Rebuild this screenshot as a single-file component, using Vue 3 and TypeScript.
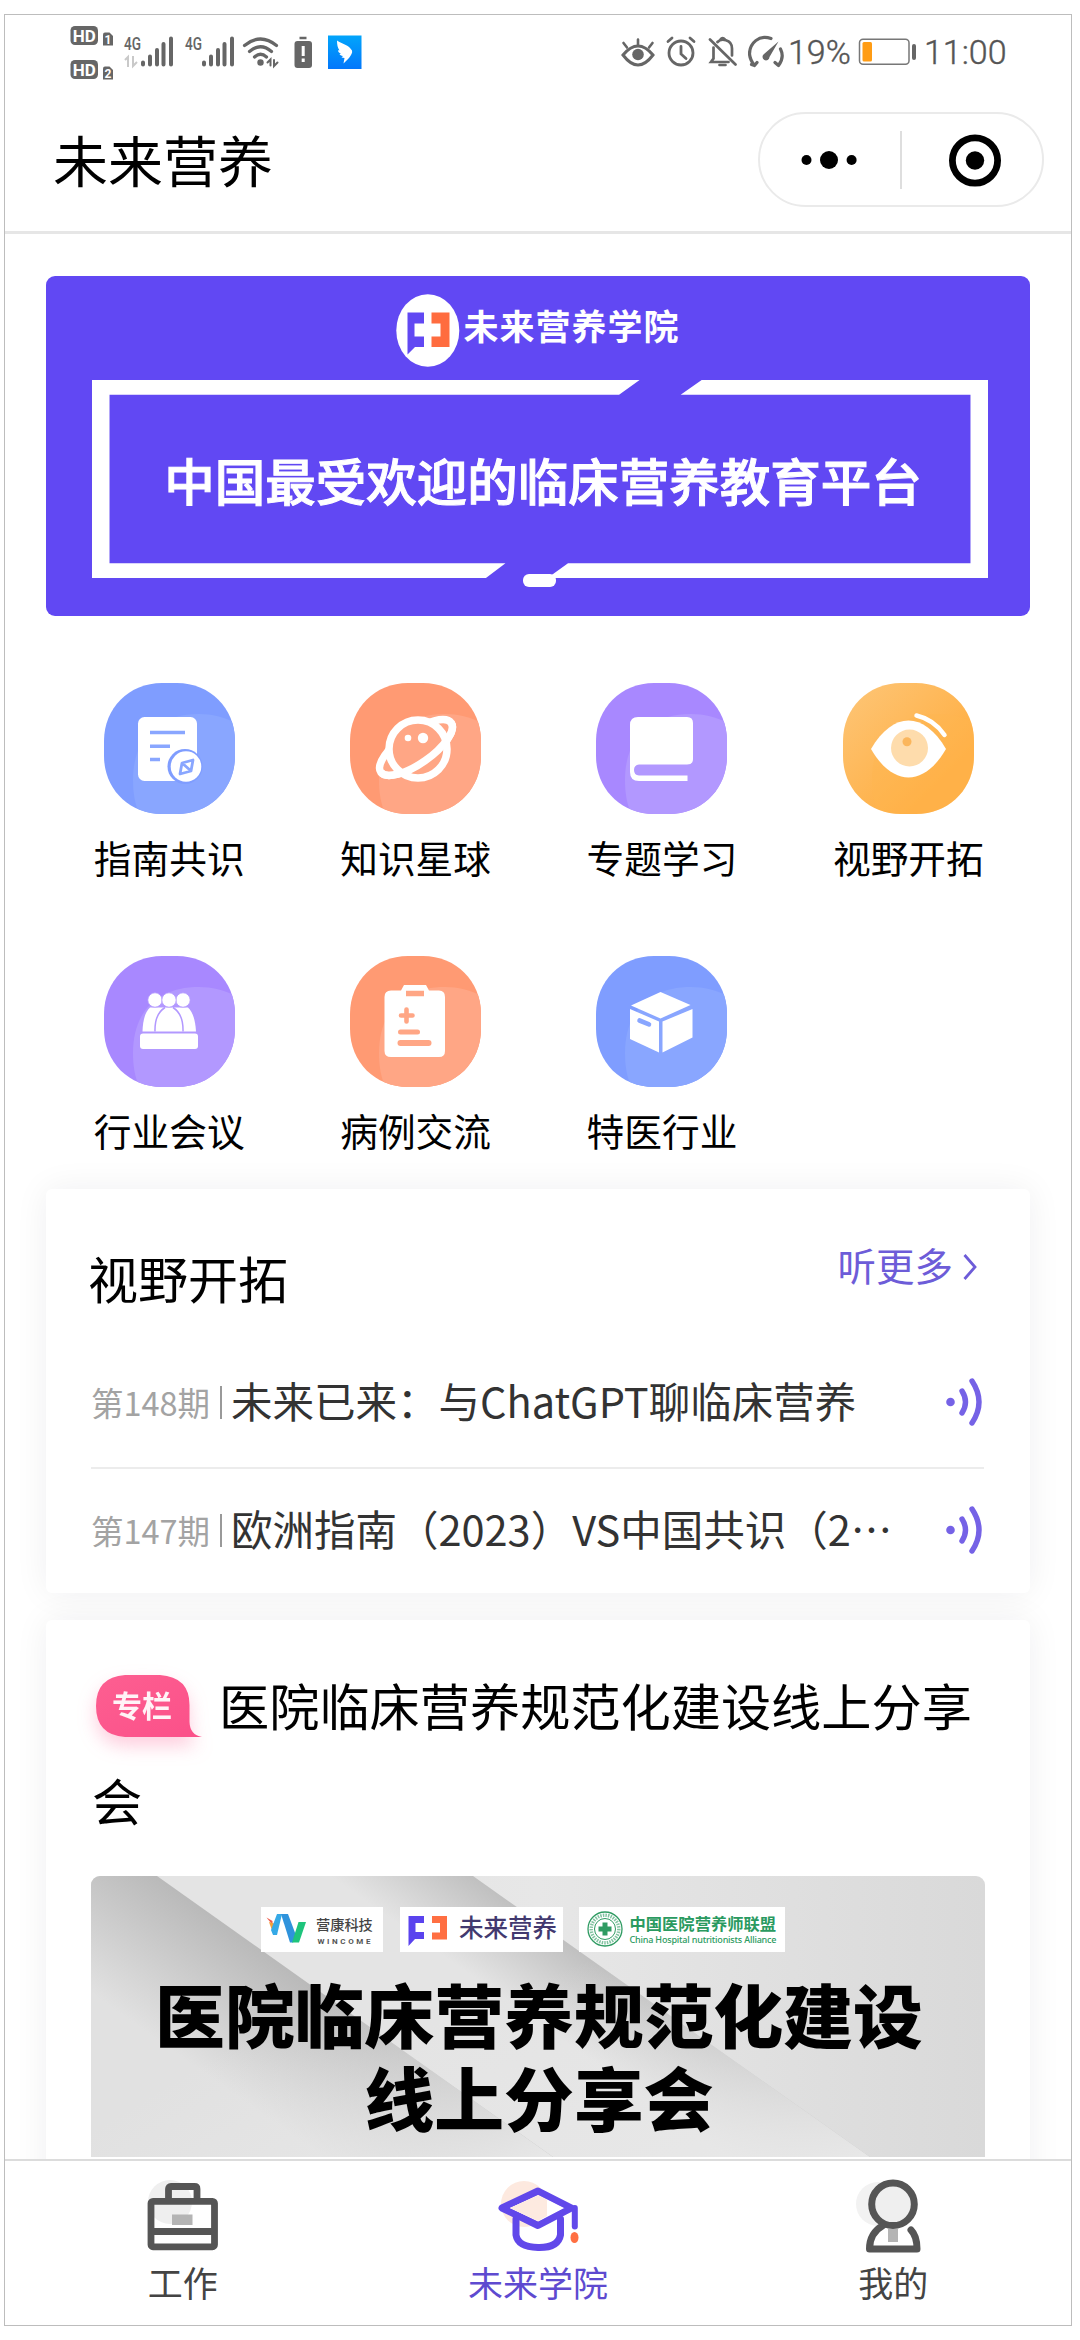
<script setup lang="ts">
interface Entry {
  label: string
  icon: string
  base: string
  glow: string
}

interface Episode {
  issue: string
  title: string
}

interface Tab {
  label: string
  icon: string
  active: boolean
}

const blue = { base: '#7f9dff', glow: '#89a6ff' }
const orange = { base: '#ff9a73', glow: '#ffa685' }
const purple = { base: '#a888ff', glow: '#b298ff' }

const entries: Entry[] = [
  { label: '指南共识', icon: 'guide', ...blue },
  { label: '知识星球', icon: 'planet', ...orange },
  { label: '专题学习', icon: 'book', ...purple },
  { label: '视野开拓', icon: 'eye', base: 'url(#amber)', glow: '#ffb550' },
  { label: '行业会议', icon: 'meeting', ...purple },
  { label: '病例交流', icon: 'clipboard', ...orange },
  { label: '特医行业', icon: 'box', ...blue },
]

const episodes: Episode[] = [
  { issue: '第148期', title: '未来已来：与ChatGPT聊临床营养' },
  { issue: '第147期', title: '欧洲指南（2023）VS中国共识（2…' },
]

const tabs: Tab[] = [
  { label: '工作', icon: 'work', active: false },
  { label: '未来学院', icon: 'academy', active: true },
  { label: '我的', icon: 'mine', active: false },
]

const squircle =
  'M58 0H73C106 0 131 25 131 58V73C131 106 106 131 73 131H58C25 131 0 106 0 73V58C0 25 25 0 58 0Z'
</script>

<template>
  <div class="phone">
    <header class="status">
      <div class="status-left">
        <svg class="hd" width="46" height="73" viewBox="70 15 46 73">
          <g v-for="(n, i) in ['1', '2']" :key="n" :transform="`translate(0 ${i * 34})`">
            <rect x="70.500" y="26" width="27.500" height="19" rx="4.500" fill="#666" />
            <text x="84.200" y="41.500" text-anchor="middle" font-size="17" font-weight="700" fill="#fff" class="latin">HD</text>
            <path d="M103 34.500a2 2 0 0 1 2-2h4.500l3.500 3.500v9.500h-10z" fill="#666" />
            <text x="108" y="44" text-anchor="middle" font-size="12" font-weight="700" fill="#fff" class="latin">{{ n }}</text>
          </g>
        </svg>
        <svg v-for="s in 2" :key="s" class="signal" width="51" height="73" viewBox="123 15 51 73">
          <text x="124" y="50" font-size="18.500" font-weight="500" textLength="17" lengthAdjust="spacingAndGlyphs" fill="#666" class="latin">4G</text>
          <path v-if="s === 1" d="M125 60l3-3v10M133 56v10l4-4" fill="none" stroke="#c9c9c9" stroke-width="2" />
          <path d="M143 62.500v2M150 56.500v8M157 50v14.500M163.500 44v20.500M171 38.500v26" stroke="#666" stroke-width="4" stroke-linecap="round" />
        </svg>
        <svg class="wifi" width="38" height="73" viewBox="242 15 38 73">
          <g fill="none" stroke="#666" stroke-width="3.200" stroke-linecap="round">
            <path d="M244.500 45.500Q260.500 32.500 276.500 45.500M249.500 51.500Q260.500 42 271.500 51.500M254.500 57Q260.500 51.500 266.500 57" />
            <path d="M267.500 62.500l3-3v6M274 60v6l3.500-3.500" stroke-width="2" />
          </g>
          <circle cx="260.500" cy="62.500" r="3.200" fill="#666" />
        </svg>
        <svg class="alert" width="18" height="73" viewBox="294 15 18 73">
          <path d="M299.500 38h7" stroke="#666" stroke-width="2.500" />
          <rect x="294.500" y="41" width="17.500" height="27" rx="3" fill="#666" />
          <path d="M303.200 46v10M303.200 58.500v3.500" stroke="#fff" stroke-width="3" />
        </svg>
        <svg class="app" width="34" height="73" viewBox="328 15 34 73">
          <defs>
            <linearGradient id="ding" x1="0" y1="0" x2="0" y2="1">
              <stop offset="0" stop-color="#02a5fb" />
              <stop offset="1" stop-color="#0377fb" />
            </linearGradient>
          </defs>
          <rect x="328" y="35.500" width="33.500" height="33.500" fill="url(#ding)" />
          <path d="M337 40.500c5 3.500 12 4.500 15 10 .8 2-1 5-3 7.500l-5.500 5.500 1-5.500-3-.5 1.500-1.500c-2-.3-3-1-3.500-2l1.500-.3c-2-1-3-2-3-3.500l1.500.3c-2-3-2.500-6-2.500-10z" fill="#fff" />
        </svg>
      </div>
      <div class="status-right">
        <svg width="34" height="73" viewBox="620 15 34 73">
          <g fill="none" stroke="#666" stroke-width="3" stroke-linecap="round">
            <path d="M622 55Q637 37 652 55Q637 75 622 55Z" />
            <path d="M637 39.500v6M622.500 43l3.500 4.500M651.500 43l-3.500 4.500" stroke-width="2.600" />
          </g>
          <circle cx="637" cy="54.500" r="5.800" fill="#666" />
        </svg>
        <svg class="alarm" width="30" height="73" viewBox="665 15 30 73">
          <g fill="none" stroke="#666" stroke-width="2.800" stroke-linecap="round">
            <circle cx="680" cy="53" r="12" />
            <path d="M680 46.500v7.500l5 4.500M667 41.500l4-3.500M693 41.500l-4-3.500" />
          </g>
        </svg>
        <svg class="bell" width="29" height="73" viewBox="707 15 29 73">
          <g fill="none" stroke="#666" stroke-width="2.700" stroke-linecap="round">
            <path d="M709 39.500l25.500 25M712.500 47.500v11l-2.500 3.500h17.500M716.500 42c3-3.500 14.500-3.500 14.500 6.500v7" />
            <path d="M719.500 39.500q2-3 4.500 0M718.500 65h6" />
          </g>
        </svg>
        <svg class="gauge" width="37" height="73" viewBox="747 15 37 73">
          <g fill="none" stroke="#666" stroke-width="3.200" stroke-linecap="round" stroke-linejoin="round">
            <path d="M770 38.500c-12-4.500-21.500 5-21.500 15.500q.5 6 5 11.500l2.500-3M779.500 49c3 6 1.500 12-2 16.500l-3.500-3M753.500 65.500l-3-1" />
          </g>
          <path d="M777.500 41.500l-9 15.500a3.500 3.500 0 1 1-5.500-3z" fill="#666" />
        </svg>
        <span class="pct">19%</span>
        <svg class="battery" width="58" height="73" viewBox="857 15 58 73">
          <rect x="858.500" y="39.300" width="49.500" height="25" rx="3.500" fill="none" stroke="#777" stroke-width="1.500" />
          <rect x="861.500" y="42" width="9.500" height="19.500" rx="1.500" fill="#ff9c14" />
          <rect x="911" y="44" width="4" height="16" rx="2" fill="#666" />
        </svg>
        <span class="clock">11:00</span>
      </div>
    </header>

    <nav class="navbar">
      <h1>未来营养</h1>
      <div class="capsule">
        <svg width="141" height="92" viewBox="760 114 141 92">
          <circle cx="806.500" cy="160" r="5" />
          <circle cx="829" cy="160" r="9" />
          <circle cx="851.600" cy="160" r="5" />
        </svg>
        <i class="split"></i>
        <svg width="141" height="92" viewBox="901 114 141 92">
          <circle cx="975" cy="160.500" r="22.600" fill="none" stroke="#000" stroke-width="6.800" />
          <circle cx="975" cy="160.500" r="9.200" />
        </svg>
      </div>
    </nav>

    <main>
      <section class="banner">
        <div class="brand">
          <svg width="64" height="73" viewBox="393.500 293.500 64 73">
            <ellipse cx="425.300" cy="330" rx="31.500" ry="36.300" fill="#fff" />
            <path d="M405 312h16.500v11h-9.500v13h9.500v10.500h-9l-7.500 7.500z" fill="#6148f3" />
            <path d="M429 312h18v34.500h-18v-10.500h9v-13h-9z" fill="#ff6c3f" />
          </svg>
          <span>未来营养学院</span>
        </div>
        <div class="slogan">
          <svg class="outline" width="896" height="198" viewBox="92 380 895 198" preserveAspectRatio="none" fill="#fff">
            <path d="M92 380H639L618.500 394.700H109.500V563.300H505L485.500 578H92Z" />
            <path d="M701 380H987V578H547L567.500 563.300H969.500V394.700H680Z" />
          </svg>
          <span>中国最受欢迎的临床营养教育平台</span>
        </div>
        <i class="dot"></i>
      </section>

      <section class="grid">
        <div v-for="e in entries" :key="e.label" class="entry">
          <svg width="131" height="131" viewBox="0 0 131 131">
            <defs>
              <linearGradient id="amber" x1="0" y1="0" x2="1" y2="1">
                <stop offset="0" stop-color="#fdc678" />
                <stop offset="0.750" stop-color="#ffae42" />
              </linearGradient>
              <clipPath id="disc"><path :d="squircle" /></clipPath>
            </defs>
            <path :d="squircle" :fill="e.base" />
            <path d="M95 31C128 31 160 50 160 97S140 160 95 160S29 140 29 97S55 31 95 31Z" :fill="e.glow" :opacity="e.icon === 'eye' ? 0.45 : 1" clip-path="url(#disc)" />

            <g v-if="e.icon === 'guide'">
              <rect x="34" y="34" width="59" height="64" rx="6.500" fill="#fff" />
              <path d="M46 49.500h35M46 63.300h20M46 76.500h10" :stroke="e.glow" stroke-width="3.400" />
              <circle cx="81" cy="83.500" r="17.500" :fill="e.base" />
              <circle cx="82" cy="83.500" r="15.300" fill="#fff" />
              <path d="M78 80l11-3-2 11-11 3z M78 80l8.500 7.500" fill="none" :stroke="e.glow" stroke-width="2.800" stroke-linejoin="round" />
            </g>

            <g v-else-if="e.icon === 'planet'" fill="none" stroke="#fff" stroke-width="7.500">
              <ellipse cx="66" cy="64.500" rx="43" ry="16" transform="rotate(-35 66 64.500)" />
              <circle cx="68" cy="66" r="29" :fill="e.glow" />
              <path d="M43 0A43 16 0 0 1 -43 0" transform="translate(66 64.500) rotate(-35)" />
              <circle cx="58" cy="55" r="3.300" fill="#fff" stroke="none" />
              <circle cx="73" cy="55" r="5.200" fill="#fff" stroke="none" />
            </g>

            <g v-else-if="e.icon === 'book'">
              <path d="M42 34H91Q97 34 97 40V76Q97 81.500 91 81.500H43Q38 82 38 87T43 92.500H91.500V98H43Q34 98 34 89V42Q34 34 42 34Z" fill="#fff" />
            </g>

            <g v-else-if="e.icon === 'eye'">
              <path d="M28 66C50 28 81 28 103 66C81 104 50 104 28 66Z" fill="#fff" />
              <circle cx="66.500" cy="65" r="18.500" fill="#fedcac" />
              <circle cx="64" cy="58.800" r="4.500" fill="#fbb65c" />
              <path d="M73.500 32.500Q91 36.500 101.500 52" fill="none" stroke="#fff" stroke-width="4.500" stroke-linecap="round" />
            </g>

            <g v-else-if="e.icon === 'meeting'" fill="#fff">
              <path d="M38.500 75.500Q39 58 46 51.500H84Q91 58 92 75.500Z" />
              <path d="M51 75.500Q50.500 58 61 51.500M79 75.500Q79.500 58 69 51.500" fill="none" :stroke="e.glow" stroke-width="1.500" />
              <g :stroke="e.glow" stroke-width="0.800">
                <circle cx="51" cy="44" r="7.200" />
                <circle cx="79" cy="44" r="7.200" />
                <circle cx="65" cy="44" r="7.200" />
              </g>
              <rect x="36" y="77.500" width="58" height="15.500" rx="3" />
            </g>

            <g v-else-if="e.icon === 'clipboard'">
              <path d="M41 34.500H51L54 29H76L79 34.500H89Q95 34.500 95 41V95Q95 101 89 101H41Q34.500 101 34.500 95V41Q34.500 34.500 41 34.500Z" fill="#fff" />
              <g :stroke="e.glow" stroke-linecap="round">
                <path d="M56 37.500h18" stroke-width="5.500" stroke-linecap="butt" />
                <path d="M56.500 53.500v12M51 59.500h11.500" stroke-width="4.600" />
                <path d="M50.500 76h17" stroke-width="5" />
                <path d="M50.500 87h28" stroke-width="6" />
              </g>
            </g>

            <g v-else fill="#fff">
              <path d="M64.500 36L94.500 49L64.500 62.500L35 49.500Z" />
              <path d="M34 53L63 65.500V96.500L34 83Z" />
              <path d="M66.500 65.500L96.500 53V81.500L66.500 96.500Z" />
              <path d="M43.500 64.500l9.500 3.800" :stroke="e.glow" stroke-width="4.600" stroke-linecap="round" />
            </g>
          </svg>
          <span>{{ e.label }}</span>
        </div>
      </section>

      <section class="card audio">
        <div class="card-head">
          <h2>视野开拓</h2>
          <a class="more">
            听更多
            <svg width="16" height="28" viewBox="0 0 16 28"><path d="M3.500 2L14 14L3.500 26" fill="none" stroke="#6d5cd8" stroke-width="2.800" /></svg>
          </a>
        </div>
        <div v-for="ep in episodes" :key="ep.issue" class="episode">
          <span class="issue">{{ ep.issue }}</span>
          <i class="bar"></i>
          <span class="title">{{ ep.title }}</span>
          <svg class="wave" width="38" height="50" viewBox="0 0 38 50">
            <circle cx="4.500" cy="25" r="4.300" fill="#7562e6" />
            <path d="M16 14Q23 25 16 36M26 4Q40 25 26 46" fill="none" stroke="#7562e6" stroke-width="5.400" stroke-linecap="round" />
          </svg>
        </div>
      </section>

      <section class="card column">
        <p class="headline"><svg class="tag" width="127" height="62" viewBox="92 1675 127 62">
            <defs>
              <linearGradient id="pink" x1="0" y1="0" x2="1" y2="1">
                <stop offset="0" stop-color="#fd5f91" />
                <stop offset="1" stop-color="#fb5089" />
              </linearGradient>
            </defs>
            <path d="M125 1675H160Q189.500 1677 189.500 1705V1722Q190 1735 202 1737H125Q96 1735 96 1706T125 1675Z" fill="url(#pink)" />
            <text x="142" y="1717" text-anchor="middle" font-size="30" font-weight="700" fill="#fff4f7">专栏</text>
          </svg>医院临床营养规范化建设线上分享会</p>
        <div class="cover">
          <svg class="cover-bg" width="894" height="281" viewBox="91 1876 894 281" preserveAspectRatio="none">
            <defs>
              <linearGradient id="sheet" x1="0" y1="0" x2="1" y2="0">
                <stop offset="0" stop-color="#e0e0e0" />
                <stop offset="0.500" stop-color="#e7e7e7" />
                <stop offset="1" stop-color="#d9d9d9" />
              </linearGradient>
              <linearGradient id="foldA" gradientUnits="userSpaceOnUse" x1="270" y1="1950" x2="190" y2="2063">
                <stop offset="0" stop-color="#b8b8b8" />
                <stop offset="1" stop-color="#e1e1e1" />
              </linearGradient>
              <linearGradient id="foldB" gradientUnits="userSpaceOnUse" x1="600" y1="1960" x2="550" y2="2031">
                <stop offset="0" stop-color="#bebebe" />
                <stop offset="1" stop-color="#e4e4e4" />
              </linearGradient>
              <linearGradient id="fadeA" x1="0" y1="0" x2="1" y2="1">
                <stop offset="0.450" stop-color="#e8e8e8" stop-opacity="0" />
                <stop offset="1" stop-color="#e8e8e8" />
              </linearGradient>
            </defs>
            <rect x="91" y="1876" width="894" height="281" fill="url(#sheet)" />
            <path d="M473 1876L870 2157H553L157 1876Z" fill="url(#foldB)" />
            <path d="M473 1876L870 2157H553L157 1876Z" fill="url(#fadeA)" />
            <path d="M91 1876H157L553 2157H91Z" fill="url(#foldA)" />
            <path d="M91 1876H157L553 2157H91Z" fill="url(#fadeA)" />
          </svg>
          <div class="partners">
            <svg width="122" height="45" viewBox="261 1907 122 45">
              <rect x="261" y="1907" width="122" height="45" fill="#fff" />
              <path d="M266.500 1917.500l6 3.500v4z" fill="#ef5b4c" />
              <path d="M269 1922l7 2-4.500 5z" fill="#f4a13a" />
              <path d="M282 1914l-5 21h-4l-2-5 6-16z" fill="#35a9e6" />
              <path d="M281 1914h7l9 24-4 4.500h-3z" fill="#2f93dc" />
              <path d="M298.500 1922h7.500l-7 20.500h-7z" fill="#1ec47c" />
              <text x="316" y="1930" font-size="14.200" font-weight="500" fill="#444">营康科技</text>
              <text x="317.500" y="1943.500" font-size="8" font-weight="700" textLength="53" fill="#555" class="latin">WINCOME</text>
            </svg>
            <svg width="163" height="45" viewBox="400 1907 163 45">
              <rect x="400" y="1907" width="163" height="45" fill="#fff" />
              <path d="M408.500 1916h15.500v7h-8.500v9h8.500v7h-9l-6.500 7z" fill="#5a43ee" />
              <path d="M432 1916h15v23.500h-15v-7h8v-9.500h-8z" fill="#ff6f42" />
              <text x="459" y="1937" font-size="24.500" font-weight="500" fill="#42396f">未来营养</text>
            </svg>
            <svg width="206" height="45" viewBox="579 1907 206 45">
              <rect x="579" y="1907" width="206" height="45" fill="#fff" />
              <g fill="none" stroke="#2f9b62">
                <circle cx="605" cy="1929" r="17" stroke-width="1.300" />
                <circle cx="605" cy="1929" r="13.800" stroke-width="3.400" stroke-dasharray="1.500 1.100" opacity="0.600" />
                <circle cx="605" cy="1929" r="10.500" stroke-width="1" />
                <path d="M605 1922.500v13M598.500 1929h13" stroke-width="5" />
              </g>
              <text x="629.500" y="1929.500" font-size="16.300" font-weight="700" fill="#2a9a60">中国医院营养师联盟</text>
              <text x="629.500" y="1942.500" font-size="9" textLength="147" font-weight="500" fill="#2a9a60" class="noto">China Hospital nutritionists Alliance</text>
            </svg>
          </div>
          <div class="cover-title">医院临床营养规范化建设<br />线上分享会</div>
        </div>
      </section>
    </main>

    <footer class="tabbar">
      <div v-for="t in tabs" :key="t.label" class="tab" :class="{ active: t.active }">
        <svg width="100" height="80" viewBox="0 0 100 80">
          <g v-if="t.icon === 'work'">
            <circle cx="37" cy="25" r="22" fill="#efefef" />
            <g fill="none" stroke="#555" stroke-width="6.800" stroke-linejoin="round">
              <path d="M35.500 22V12Q35.500 9.500 38 9.500H61.500Q64 9.500 64 12V22" />
              <rect x="18" y="24.300" width="63.500" height="45.500" rx="2" />
              <path d="M18 54.500H82" />
            </g>
            <rect x="39" y="37.500" width="20.500" height="10.500" fill="#b4b4b4" />
          </g>
          <g v-else-if="t.icon === 'academy'">
            <circle cx="36" cy="27" r="23" fill="#fde9df" />
            <g fill="none" stroke="#6148ea" stroke-width="7" stroke-linejoin="round" stroke-linecap="round">
              <path d="M28 42V58Q30 70 50 70.500T72.500 58V42" />
              <path d="M50 14L83.500 31L50 48.500L14 31Z" />
              <path d="M50 18.500L75 31L50 44L22 31Z" fill="#fff" stroke="none" />
              <path d="M22 31L50 18.500L59 23V39L50 44Z" fill="#fdeae0" stroke="none" />
              <path d="M86.800 31V49.500" stroke-width="6" />
            </g>
            <ellipse cx="86.500" cy="60.500" rx="4" ry="5.500" fill="#ff6f42" />
          </g>
          <g v-else>
            <circle cx="35" cy="27" r="22" fill="#f2f2f2" />
            <circle cx="50" cy="27.300" r="21.300" fill="#efefef" />
            <rect x="45" y="52" width="10" height="13" fill="#b4b4b4" />
            <g fill="none" stroke="#555" stroke-width="7" stroke-linejoin="round" stroke-linecap="round">
              <circle cx="50" cy="27.300" r="21.300" />
              <path d="M40 48.500Q26.500 56 26.500 72H74Q74 59 68 53" />
            </g>
          </g>
        </svg>
        <span>{{ t.label }}</span>
      </div>
    </footer>
  </div>
</template>

<style>
html,
body {
  margin: 0;
  background: #fff;
}
</style>

<style scoped>
.phone {
  box-sizing: border-box;
  width: 1068px;
  height: 2312px;
  margin: 14px 0 0 4px;
  border: 1px solid #bdbdbd;
  display: flex;
  flex-direction: column;
  font-family: 'Noto Sans CJK SC', sans-serif;
  color: #000;
  background: #fff;
  overflow: hidden;
}
svg {
  display: block;
  flex: none;
}
h1,
h2,
p {
  margin: 0;
  font-weight: 400;
}
.latin {
  font-family: Roboto, sans-serif;
}
.noto {
  font-family: 'Noto Sans', sans-serif;
}

.status {
  height: 73px;
  flex: none;
  display: flex;
  justify-content: space-between;
  padding: 0 65px 0 65px;
}
.status-left,
.status-right {
  display: flex;
}
.signal {
  margin-left: 7px;
}
.signal + .signal {
  margin-left: 10px;
}
.wifi {
  margin-left: 7px;
}
.alert {
  margin-left: 14px;
}
.app {
  margin-left: 16px;
}
.alarm {
  margin-left: 11px;
}
.bell {
  margin-left: 12px;
}
.gauge {
  margin-left: 11px;
}
.pct,
.clock {
  font: 300 34px/75px Roboto, sans-serif;
  color: #555;
  -webkit-text-stroke: 0.4px #555;
}
.pct {
  width: 62px;
  margin-left: 3px;
}
.battery {
  margin-left: 8px;
}
.clock {
  margin-left: 8px;
  width: 82px;
  white-space: nowrap;
}

.navbar {
  box-sizing: border-box;
  height: 146px;
  flex: none;
  border-bottom: 3px solid #e6e6e6;
  padding: 0 27px 0 48px;
  display: flex;
  align-items: center;
  justify-content: space-between;
}
.navbar h1 {
  font-size: 55px;
  line-height: 80px;
  margin-bottom: 3px;
}
.capsule {
  box-sizing: border-box;
  width: 286px;
  height: 95px;
  border: 2px solid #eaeaea;
  border-radius: 48px;
  display: flex;
  align-items: center;
}
.split {
  width: 2px;
  height: 58px;
  background: #dedede;
  margin: 0 -1px;
}

main {
  flex: 1;
  min-height: 0;
  overflow: hidden;
  padding: 42px 41px 0;
}
.banner {
  box-sizing: border-box;
  height: 340px;
  border-radius: 9px;
  background: #6148f3;
  color: #fff;
  padding: 17.5px 43px 0 46px;
  display: flex;
  flex-direction: column;
  align-items: center;
}
.brand {
  display: flex;
  align-items: center;
  width: 288px;
  height: 73px;
}
.brand span {
  font-size: 35px;
  font-weight: 700;
  line-height: 60px;
  letter-spacing: 1px;
  white-space: nowrap;
  margin: -10px 0 0 4px;
}
.slogan {
  width: 895px;
  height: 198px;
  margin-top: 13.500px;
  display: grid;
  place-items: center;
}
.slogan > * {
  grid-area: 1 / 1;
}
.slogan span {
  font-size: 50.500px;
  font-weight: 500;
  line-height: 76px;
  white-space: nowrap;
  margin: 0 0 0 6px;
  -webkit-text-stroke: 1px #fff;
}
.dot {
  width: 33px;
  height: 13px;
  border-radius: 6px;
  background: #fff;
  margin-top: -4px;
}

.grid {
  display: grid;
  grid-template-columns: repeat(4, 246.400px);
  row-gap: 70.500px;
  padding-top: 67px;
}
.entry {
  display: flex;
  flex-direction: column;
  align-items: center;
}
.entry span {
  font-size: 37.700px;
  line-height: 56px;
  margin-top: 15px;
}

.card {
  background: #fff;
  border-radius: 6px;
  box-shadow: 0 0 34px rgba(20, 20, 50, 0.065);
}
.audio {
  box-sizing: border-box;
  height: 404px;
  margin-top: 31.500px;
  padding: 58px 46px 0 45px;
}
.card-head {
  height: 60px;
  display: flex;
  align-items: flex-start;
  justify-content: space-between;
  padding-right: 7px;
  margin-bottom: 29px;
}
.card-head h2 {
  font-size: 50px;
  line-height: 60px;
  margin-left: -3px;
}
.more {
  display: flex;
  align-items: center;
  gap: 8px;
  font-size: 38.500px;
  line-height: 34px;
  color: #6d5cd8;
}
.more svg {
  margin-top: 5px;
}
.episode {
  box-sizing: border-box;
  height: 133px;
  border-bottom: 2px solid #ececec;
  display: flex;
  align-items: center;
}
.episode:last-child {
  height: 121px;
  border: 0;
}
.issue {
  font-size: 32.500px;
  color: #a3a3a3;
  width: 121px;
  white-space: nowrap;
}
.bar {
  width: 2px;
  height: 33px;
  background: #999;
  margin: 2px 9px 0 8px;
}
.title {
  font-size: 41.500px;
  color: #333;
  white-space: nowrap;
  flex: 1;
  margin-bottom: 3px;
}

.column {
  margin-top: 27px;
  height: 700px;
  padding: 36.500px 45px 0;
}
.headline {
  font-size: 50.200px;
  line-height: 95px;
  padding-left: 1px;
  white-space: normal;
  margin-right: -4px;
}
.tag {
  display: inline-block;
  vertical-align: -11px;
  overflow: visible;
  filter: drop-shadow(0 9px 9px rgba(251, 80, 137, 0.28));
}
.cover {
  height: 281px;
  margin-top: 29px;
  border-radius: 9px 9px 0 0;
  overflow: hidden;
  display: grid;
  grid-template-rows: 31px 45px 1fr;
}
.cover-bg {
  grid-area: 1 / 1 / 4 / 2;
}
.partners {
  grid-area: 2 / 1;
  display: flex;
  justify-content: flex-start;
  gap: 16.500px;
  padding-left: 170px;
  z-index: 1;
}
.cover-title {
  grid-area: 3 / 1;
  z-index: 1;
  text-align: center;
  font-size: 69.800px;
  font-weight: 900;
  line-height: 83px;
  padding: 19px 0 0 2px;
}

.tabbar {
  box-sizing: border-box;
  height: 166px;
  flex: none;
  border-top: 2px solid #dcdcdc;
  display: flex;
  background: #fff;
  z-index: 1;
}
.tab {
  flex: 1;
  display: flex;
  flex-direction: column;
  align-items: center;
  padding-top: 16px;
  color: #444;
}
.tab span {
  font-size: 35px;
  line-height: 50px;
}
.tab.active {
  color: #5e4ad0;
}
</style>
